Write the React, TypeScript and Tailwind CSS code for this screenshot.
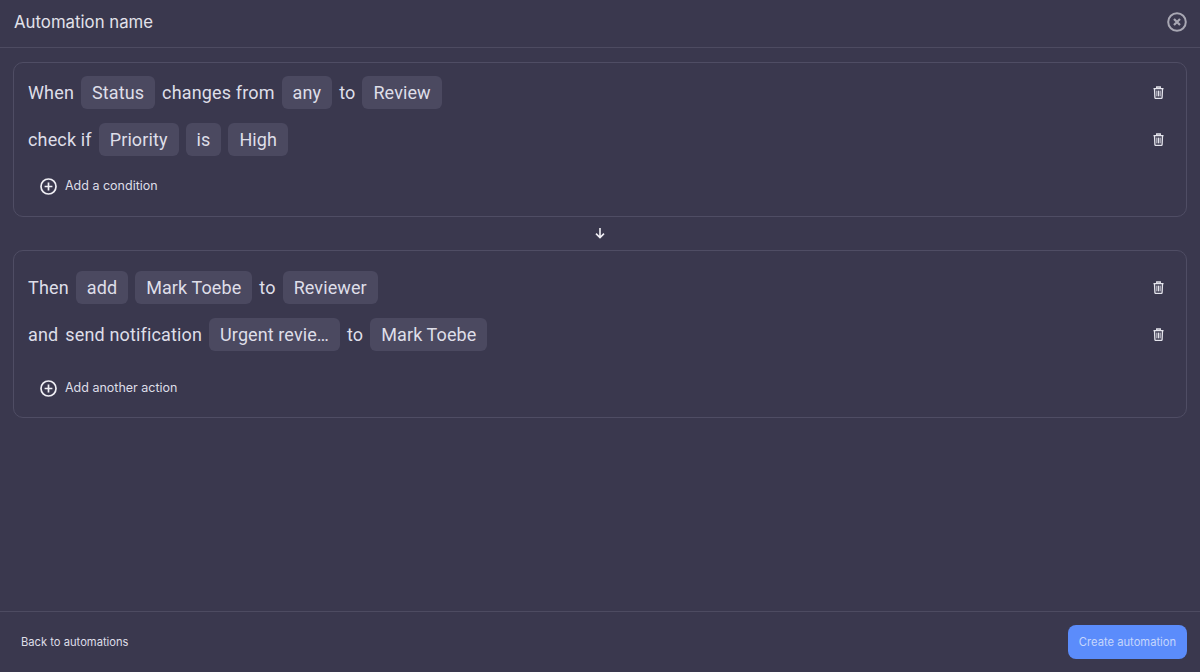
import React from "react";

const font = "font-['Roboto',sans-serif]";

function Chip({ children }: { children: React.ReactNode }) {
  return (
    <span className="flex h-[33px] items-center rounded-[6px] bg-[#4b4960] px-[11px] text-[18px] tracking-[0.1px] text-[#dedee8]">
      {children}
    </span>
  );
}

function Word({ children }: { children: React.ReactNode }) {
  return <span className="text-[18px] tracking-[0.15px] text-[#dedee8]">{children}</span>;
}

function Trash() {
  return (
    <svg width="11" height="13" viewBox="0 0 11 13" fill="none" stroke="#e4e4ec" strokeWidth="1.3" className="shrink-0">
      <path d="M0.5 2.6h10M3.7 2.6V1h3.6v1.6" />
      <path d="M1.5 2.6l.4 9c0 .4.3.8.8.8h5.6c.5 0 .8-.4.8-.8l.4-9" />
      <path d="M3.9 4.6v5.8M5.5 4.6v5.8M7.1 4.6v5.8" strokeWidth="1" />
    </svg>
  );
}

function Row({ children, className }: { children: React.ReactNode; className?: string }) {
  return (
    <div className={`flex h-[33px] items-center justify-between pr-[9px] ${className ?? ""}`}>
      <div className="flex items-center gap-[7px]">{children}</div>
      <Trash />
    </div>
  );
}

function AddLink({ children }: { children: React.ReactNode }) {
  return (
    <div className="flex h-[20px] items-center gap-[8px] pl-[12px]">
      <svg width="17" height="17" viewBox="0 0 17 17" fill="none" stroke="#f0eff5" strokeWidth="1.7">
        <circle cx="8.5" cy="8.5" r="7.5" />
        <path d="M8.5 4.6v7.8M4.6 8.5h7.8" />
      </svg>
      <span className="pt-[1px] font-['Inter',sans-serif] text-[12.5px] text-[#dedee8]">{children}</span>
    </div>
  );
}

export default function App() {
  return (
    <div className={`flex h-[672px] w-[1200px] flex-col bg-[#3a384e] ${font}`}>
      <header className="flex h-[48px] shrink-0 items-center justify-between border-b border-[#4d4b61] pb-[3px] pl-[14px] pr-[13px]">
        <span className="pt-[1px] font-['Inter',sans-serif] text-[16.8px] text-[#e2e2ea]">Automation name</span>
        <svg width="20" height="20" viewBox="0 0 20 20" fill="none" stroke="#a8a7b3" strokeWidth="2">
          <circle cx="10" cy="10" r="8.8" />
          <path d="M7 7l6 6M13 7l-6 6" strokeWidth="2.2" />
        </svg>
      </header>

      <main className="flex flex-1 flex-col px-[13px] pt-[14px]">
        <section className="h-[155px] rounded-[10px] border border-[#4f4d64] pl-[14px] pr-[13px] pt-[13px]">
          <Row>
            <Word>When</Word>
            <Chip>Status</Chip>
            <Word>changes from</Word>
            <Chip>any</Chip>
            <Word>to</Word>
            <Chip>Review</Chip>
          </Row>
          <Row className="mt-[14px]">
            <Word>check if</Word>
            <Chip>Priority</Chip>
            <Chip>is</Chip>
            <Chip>High</Chip>
          </Row>
          <div className="mt-[20px]">
            <AddLink>Add a condition</AddLink>
          </div>
        </section>

        <div className="flex h-[33px] items-center justify-center pb-[1px]">
          <svg width="12" height="12" viewBox="0 0 12 12" fill="none" stroke="#f0eff5" strokeWidth="1.6">
            <path d="M6 1v9.5M2 6.6l4 4 4-4" />
          </svg>
        </div>

        <section className="h-[168px] rounded-[10px] border border-[#4f4d64] pl-[14px] pr-[13px] pt-[20px]">
          <Row>
            <Word>Then</Word>
            <Chip>add</Chip>
            <Chip>Mark Toebe</Chip>
            <Word>to</Word>
            <Chip>Reviewer</Chip>
          </Row>
          <Row className="mt-[14px]">
            <Word>and</Word>
            <Word>send notification</Word>
            <Chip>Urgent revie…</Chip>
            <Word>to</Word>
            <Chip>Mark Toebe</Chip>
          </Row>
          <div className="mt-[27px]">
            <AddLink>Add another action</AddLink>
          </div>
        </section>
      </main>

      <footer className="flex h-[61px] shrink-0 items-center justify-between border-t border-[#4d4b61] pl-[21px] pr-[13px] font-['Inter',sans-serif] text-[11.2px]">
        <span className="pt-[1px] text-[#dedee8]">Back to automations</span>
        <button className="flex h-[34px] w-[119px] items-center justify-center rounded-[8px] bg-[#5b8cfb] pt-[1px] text-[#c6d6fb]">
          Create automation
        </button>
      </footer>
    </div>
  );
}
